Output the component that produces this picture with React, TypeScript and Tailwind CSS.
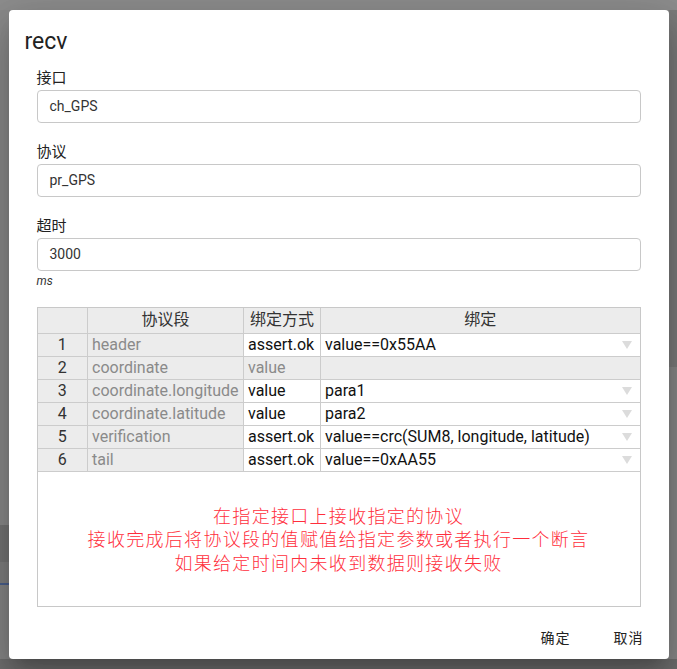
import React from 'react';

type Row = {
  idx: number;
  field: string;
  mode: string;
  bind: string;
  locked?: boolean;
};

const rows: Row[] = [
  { idx: 1, field: 'header', mode: 'assert.ok', bind: 'value==0x55AA' },
  { idx: 2, field: 'coordinate', mode: 'value', bind: '', locked: true },
  { idx: 3, field: 'coordinate.longitude', mode: 'value', bind: 'para1' },
  { idx: 4, field: 'coordinate.latitude', mode: 'value', bind: 'para2' },
  { idx: 5, field: 'verification', mode: 'assert.ok', bind: 'value==crc(SUM8, longitude, latitude)' },
  { idx: 6, field: 'tail', mode: 'assert.ok', bind: 'value==0xAA55' },
];

const fontStack = "font-['Roboto','Noto_Sans_CJK_SC',sans-serif]";

// Small field block: label + outlined input
const Field = ({ label, value, className = '' }: { label: string; value: string; className?: string }) => (
  <div className={className}>
    <div className="text-[15px] leading-[20px] text-[#222]">{label}</div>
    <div className="mt-[2px] h-[33px] rounded-[4px] border border-[#c8c8c8] pl-[12px] flex items-center text-[14px] text-[#333]">
      {value}
    </div>
  </div>
);

const Arrow = () => (
  <svg width="10" height="8" viewBox="0 0 10 8" className="mr-[8px] shrink-0">
    <path d="M0 0 L10 0 L5 8 Z" fill="#dcdcdc" />
  </svg>
);

export default function App() {
  return (
    <div className={`relative w-[677px] h-[669px] overflow-hidden bg-[#868686] ${fontStack}`}>
      {/* dimmed page behind the modal */}
      <div className="absolute inset-0 flex flex-col">
        <div className="h-[10px] bg-[#8d8d8d]" />
        <div className="flex-1 flex">
          <div className="w-[9px] flex flex-col">
            <div className="h-[515px] bg-[#8a8a8a]" />
            <div className="h-[37px] bg-[#747474]" />
            <div className="h-[23px] bg-[#7e7e7e] border-b-2 border-[#4a5f8c]" />
            <div className="flex-1 bg-[#858585]" />
          </div>
          <div className="flex-1" />
          <div className="w-[8px] flex flex-col">
            <div className="h-[357px] bg-[#7b7b7b]" />
            <div className="flex-1 bg-[#878787]" />
          </div>
        </div>
        <div className="h-[10px] bg-[#6e6e6e]" />
      </div>

      <div className="relative h-full flex items-center justify-center">
        <div className="w-[660px] h-[649px] bg-white rounded-[4px] flex flex-col pt-[18px] shadow-[0_11px_15px_-7px_rgba(0,0,0,0.2),0_24px_38px_3px_rgba(0,0,0,0.14),0_9px_46px_8px_rgba(0,0,0,0.12)]">
          <h2 className="pl-[16px] text-[23px] leading-[28px] text-[#222]">recv</h2>

          <div className="px-[28px] mt-[12px] flex flex-col">
            <Field label="接口" value="ch_GPS" />
            <Field label="协议" value="pr_GPS" className="mt-[19px]" />
            <Field label="超时" value="3000" className="mt-[19px]" />
            <div className="mt-[2px] text-[12px] leading-[16px] italic text-[#333]">ms</div>

            <div className="mt-[18px] h-[300px] border border-[#c8c8c8] flex flex-col">
              <table className="w-[602px] table-fixed border-collapse text-[16px] leading-[22px]">
                <colgroup>
                  <col className="w-[50px]" />
                  <col className="w-[156px]" />
                  <col className="w-[77px]" />
                  <col className="w-[319px]" />
                </colgroup>
                <thead>
                  <tr className="h-[25px] bg-[#ececec] text-[#333]">
                    <th className="border-b border-r border-[#cccccc] font-normal"></th>
                    <th className="border-b border-r border-[#cccccc] font-normal">协议段</th>
                    <th className="border-b border-r border-[#cccccc] font-normal">绑定方式</th>
                    <th className="border-b border-[#cccccc] font-normal">绑定</th>
                  </tr>
                </thead>
                <tbody>
                  {rows.map((r) => (
                    <tr key={r.idx} className="h-[23px]">
                      <td className="border-b border-r border-[#cccccc] bg-[#ececec] text-center text-[#333]">{r.idx}</td>
                      <td className="border-b border-r border-[#cccccc] bg-[#ececec] px-[4px] text-[#8a8a8a] whitespace-nowrap overflow-hidden">
                        {r.field}
                      </td>
                      <td
                        className={
                          r.locked
                            ? 'border-b border-r border-[#cccccc] bg-[#ececec] px-[4px] text-[#8a8a8a]'
                            : 'border-b border-r border-[#cccccc] bg-white px-[4px] text-[#111]'
                        }
                      >
                        {r.mode}
                      </td>
                      <td className={r.locked ? 'border-b border-[#cccccc] bg-[#ececec]' : 'border-b border-[#cccccc] bg-white pl-[4px]'}>
                        {!r.locked && (
                          <div className="flex items-center justify-between text-[#111] whitespace-nowrap">
                            <span>{r.bind}</span>
                            <Arrow />
                          </div>
                        )}
                      </td>
                    </tr>
                  ))}
                </tbody>
              </table>

              <div className="flex-1 flex items-center justify-center">
                <div className="text-center text-[18px] leading-[23.5px] tracking-[1.3px] text-[#ff2e3c] font-['Noto_Sans_CJK_SC',sans-serif] font-light">
                  <div>在指定接口上接收指定的协议</div>
                  <div>接收完成后将协议段的值赋值给指定参数或者执行一个断言</div>
                  <div>如果给定时间内未收到数据则接收失败</div>
                </div>
              </div>
            </div>
          </div>

          <div className="px-[25px] mt-[20px] flex justify-end gap-[43px] text-[14px] leading-[20px] text-[#222] tracking-[1px] font-['Noto_Sans_CJK_SC',sans-serif]">
            <button>确定</button>
            <button>取消</button>
          </div>
        </div>
      </div>
    </div>
  );
}
